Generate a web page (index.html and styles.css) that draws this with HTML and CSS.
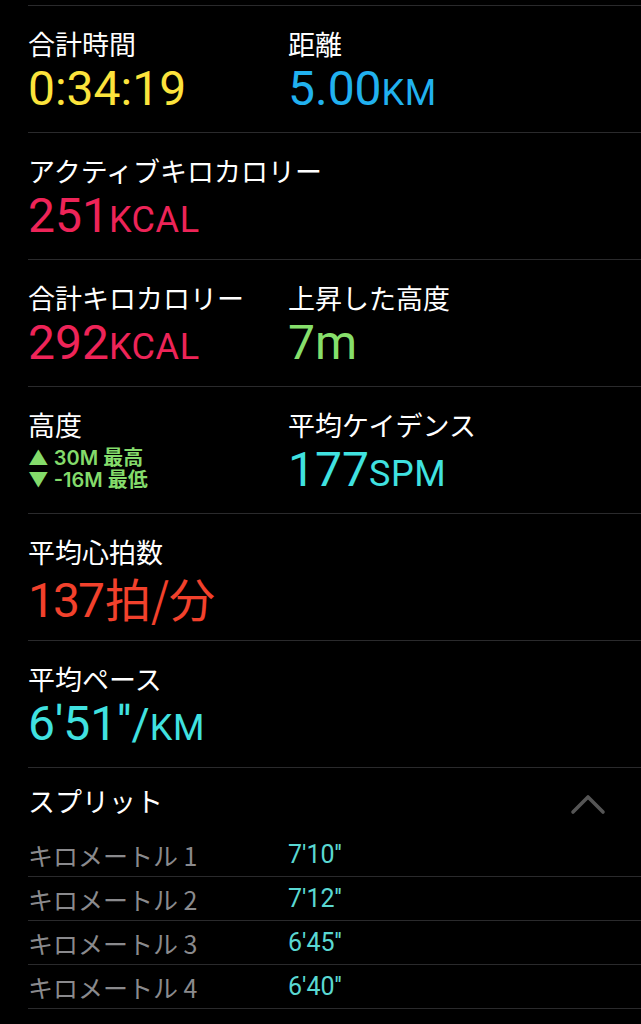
FILE: index.html
```html
<!DOCTYPE html>
<html lang="ja">
<head>
  <meta charset="UTF-8" />
  <title>ワークアウト</title>
  <meta name="viewport" content="width=device-width, initial-scale=1">
  <link rel="stylesheet" href="styles.css">
</head>
<body>
  <div class="list">
    <div class="row">
      <div class="cell">
        <div class="label">合計時間</div>
        <div class="value yellow">0:34:19</div>
      </div>
      <div class="cell">
        <div class="label">距離</div>
        <div class="value blue">5.00<span class="unit">KM</span></div>
      </div>
    </div>

    <div class="row">
      <div class="cell wide">
        <div class="label">アクティブキロカロリー</div>
        <div class="value pink">251<span class="unit">KCAL</span></div>
      </div>
    </div>

    <div class="row">
      <div class="cell">
        <div class="label">合計キロカロリー</div>
        <div class="value pink">292<span class="unit">KCAL</span></div>
      </div>
      <div class="cell">
        <div class="label">上昇した高度</div>
        <div class="value green">7m</div>
      </div>
    </div>

    <div class="row">
      <div class="cell">
        <div class="label">高度</div>
        <div class="range">
          <div>▲ 30M 最高</div>
          <div>▼ -16M 最低</div>
        </div>
      </div>
      <div class="cell">
        <div class="label">平均ケイデンス</div>
        <div class="value cyan">177<span class="unit">SPM</span></div>
      </div>
    </div>

    <div class="row">
      <div class="cell wide">
        <div class="label">平均心拍数</div>
        <div class="value red"><span class="tight">137</span><span class="jp">拍/分</span></div>
      </div>
    </div>

    <div class="row">
      <div class="cell wide">
        <div class="label">平均ペース</div>
        <div class="value cyan">6'51''<span class="slash">/</span><span class="unit">KM</span></div>
      </div>
    </div>

    <div class="splits">
      <div class="splits-head">
        <div class="label">スプリット</div>
        <svg class="chevron" width="36" height="22" viewBox="0 0 36 22">
          <polyline points="3,19 18,4 33,19" fill="none" stroke="#555" stroke-width="3.6" stroke-linecap="round" stroke-linejoin="round"/>
        </svg>
      </div>
      <div class="split"><span class="split-name">キロメートル 1</span><span class="split-time">7'10''</span></div>
      <div class="split"><span class="split-name">キロメートル 2</span><span class="split-time">7'12''</span></div>
      <div class="split"><span class="split-name">キロメートル 3</span><span class="split-time">6'45''</span></div>
      <div class="split"><span class="split-name">キロメートル 4</span><span class="split-time">6'40''</span></div>
    </div>
  </div>
</body>
</html>
```

FILE: styles.css
```css
body {
  margin: 0;
  background: #000;
  color: #fff;
  font-family: Roboto, "Noto Sans CJK JP", sans-serif;
}
.list {
  padding-top: 5px;
  padding-left: 28px;
}
.row {
  display: flex;
  height: 127px;
  box-sizing: border-box;
  border-top: 1px solid #2a2a2c;
  padding-top: 22px;
}
.cell {
  width: 260px;
}
.cell.wide {
  width: auto;
}
.label {
  font-family: "Noto Sans CJK JP", sans-serif;
  font-size: 27px;
  line-height: 32px;
}
.value {
  font-size: 48px;
  line-height: 52px;
  margin-top: 3px;
}
.unit {
  font-size: 36px;
  letter-spacing: 0.6px;
}
.tight {
  letter-spacing: -2px;
}
.jp {
  font-family: "Noto Sans CJK JP", sans-serif;
  font-size: 46px;
  margin-left: 2px;
}
.slash {
  font-size: 44px;
}
.yellow { color: #fce33c; }
.blue { color: #21b1ef; }
.pink { color: #ee2458; }
.green { color: #86df6b; }
.cyan { color: #40e2e0; }
.red { color: #f2412c; }
.range {
  margin-top: 6px;
  font-family: Inter, "Noto Sans CJK JP", sans-serif;
  font-size: 20px;
  line-height: 22px;
  font-weight: 600;
  color: #84db6b;
}
.splits {
  border-top: 1px solid #2a2a2c;
}
.splits-head {
  display: flex;
  justify-content: space-between;
  align-items: center;
  height: 65px;
  padding-right: 35px;
}
.chevron {
  margin-top: 6px;
}
.split {
  display: flex;
  align-items: center;
  height: 43px;
  border-bottom: 1px solid #2a2a2c;
  font-size: 25px;
}
.split-name {
  width: 260px;
  color: #8a8a8d;
  font-family: "Noto Sans CJK JP", sans-serif;
}
.split-time {
  color: #5ad8d2;
}
```
